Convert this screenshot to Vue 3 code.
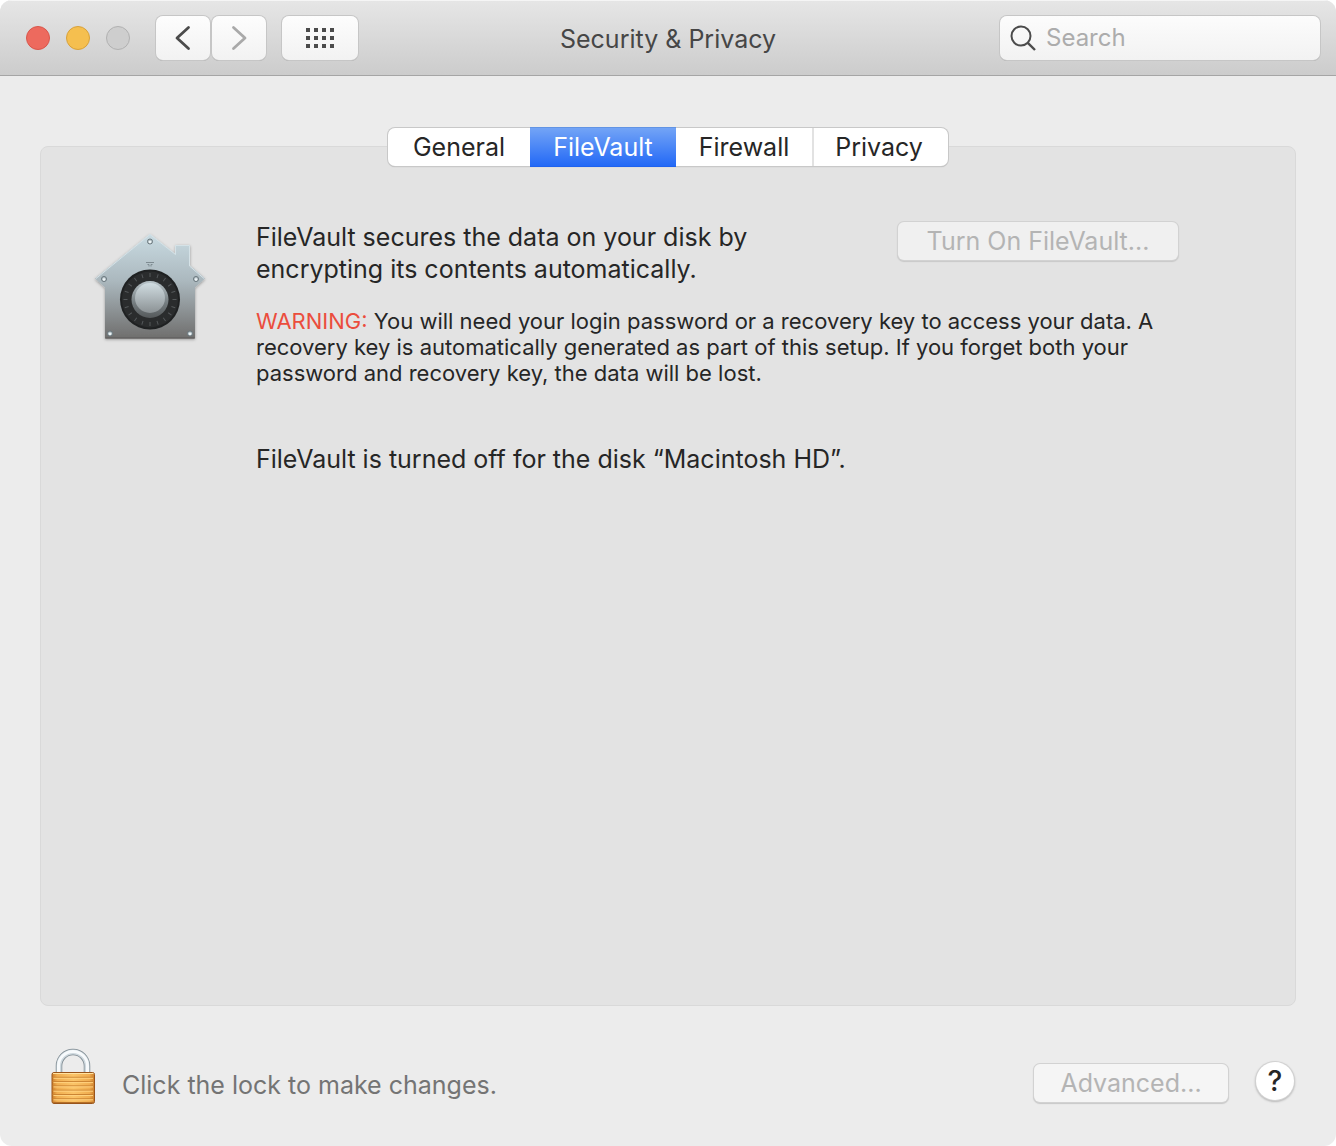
<script setup>
import { ref } from 'vue';

const tabs = ['General', 'FileVault', 'Firewall', 'Privacy'];
const activeTab = ref('FileVault');
const search = ref('');

// Ticks around the safe dial, one every 18 degrees
const ticks = Array.from({ length: 20 }, (_, i) => i * 18);
const rivets = [
    { x: 70, y: 20.5 },
    { x: 24, y: 58 },
    { x: 116, y: 58 },
    { x: 30, y: 112.5 },
    { x: 110, y: 112.5 }
];
</script>

<template>
    <div class="window">
        <header class="toolbar">
            <div class="toolbar-left">
                <div class="lights">
                    <button class="light red" aria-label="Close"></button>
                    <button class="light yellow" aria-label="Minimize"></button>
                    <button class="light gray" aria-label="Zoom" disabled></button>
                </div>
                <div class="nav">
                    <button class="tool-btn" aria-label="Back">
                        <svg width="54" height="44" viewBox="0 0 54 44">
                            <path d="M32.5 11.500L21 22L32.5 32.500" fill="none" stroke="#4b4b4b" stroke-width="2.8" stroke-linecap="round" stroke-linejoin="round" />
                        </svg>
                    </button>
                    <button class="tool-btn" aria-label="Forward" disabled>
                        <svg width="54" height="44" viewBox="0 0 54 44">
                            <path d="M21.5 11.500L33 22L21.5 32.500" fill="none" stroke="#a9a9a9" stroke-width="2.8" stroke-linecap="round" stroke-linejoin="round" />
                        </svg>
                    </button>
                </div>
                <button class="tool-btn grid-btn" aria-label="Show All">
                    <svg width="28" height="20" viewBox="0 0 28 20" fill="#4b4b4b">
                        <template v-for="row in 3" :key="row">
                            <rect v-for="col in 4" :key="col" :x="(col - 1) * 8" :y="(row - 1) * 8" width="4" height="4" />
                        </template>
                    </svg>
                </button>
            </div>

            <h1 class="title">Security &amp; Privacy</h1>

            <label class="search">
                <svg width="26" height="26" viewBox="0 0 26 26" fill="none" stroke="#4b4b4b" stroke-width="2">
                    <circle cx="11" cy="11" r="9.5" />
                    <path d="M17.8 17.8L25 25" stroke-width="2.4" />
                </svg>
                <input v-model="search" type="text" placeholder="Search" aria-label="Search">
            </label>
        </header>

        <main class="content">
            <div class="tabs" role="tablist">
                <button
                    v-for="tab in tabs"
                    :key="tab"
                    class="tab"
                    :class="{ active: tab === activeTab }"
                    role="tab"
                    :aria-selected="tab === activeTab"
                    @click="activeTab = tab"
                >{{ tab }}</button>
            </div>

            <section class="panel">
                <svg class="vault" width="140" height="130" viewBox="0 1 140 130">
                    <defs>
                        <linearGradient id="steel" x1="0" y1="0" x2="0" y2="1">
                            <stop offset="0" stop-color="#c9dbe2" />
                            <stop offset="0.45" stop-color="#abb8be" />
                            <stop offset="1" stop-color="#6f6e6d" />
                        </linearGradient>
                        <linearGradient id="knob" x1="0" y1="0" x2="0" y2="1">
                            <stop offset="0" stop-color="#d0dce1" />
                            <stop offset="1" stop-color="#8b9194" />
                        </linearGradient>
                        <linearGradient id="rim" x1="0" y1="0" x2="0" y2="1">
                            <stop offset="0" stop-color="#b9c5ca" />
                            <stop offset="0.6" stop-color="#747c7f" />
                            <stop offset="1" stop-color="#55595b" />
                        </linearGradient>
                        <filter id="drop" x="-10%" y="-10%" width="120%" height="120%">
                            <feDropShadow dx="0" dy="1" stdDeviation="1.5" flood-color="#000" flood-opacity="0.35" />
                        </filter>
                    </defs>
                    <path d="M70 14L95.500 34V25H110V45.500L125 58.500L115 67.500V118.500H25V67.500L15 58.500Z" fill="url(#steel)" filter="url(#drop)" />
                    <path d="M16 58.500L70 14.500L95.500 34.500V25.500H109.500V46L124 58.500" fill="none" stroke="#d5e2e7" stroke-width="1" />
                    <path d="M25.500 118H114.500" stroke="#5a5959" stroke-width="1" />
                    <path d="M66 42.500H74M67.500 44.500H69V46.500M72.500 44.500H71V46.500" fill="none" stroke="#7e8b91" stroke-width="1" />
                    <g v-for="(r, i) in rivets" :key="i">
                        <circle :cx="r.x" :cy="r.y + 1" r="2.5" fill="#b9c5ca" stroke="#68757b" stroke-width="1" />
                        <circle :cx="r.x" :cy="r.y + 1.5" r="1.3" fill="#edf4f6" />
                    </g>
                    <circle cx="70" cy="79.5" r="30" fill="#1f2122" />
                    <circle cx="70" cy="79.5" r="28" fill="#2a2c2d" />
                    <path
                        v-for="angle in ticks"
                        :key="angle"
                        d="M70 53V57"
                        stroke="#54585a"
                        stroke-width="1"
                        :transform="`rotate(${angle} 70 79.5)`"
                    />
                    <circle cx="70" cy="79.5" r="18.5" fill="url(#rim)" />
                    <circle cx="70" cy="78" r="15" fill="url(#knob)" />
                </svg>

                <div class="info">
                    <div class="intro">
                        <p class="lead">FileVault secures the data on your disk by<br>encrypting its contents automatically.</p>
                        <button class="push-btn turn-on" disabled>Turn On FileVault...</button>
                    </div>
                    <p class="warning">
                        <span class="warning-label">WARNING:</span> You will need your login password or a recovery key to access your data. A<br>
                        recovery key is automatically generated as part of this setup. If you forget both your<br>
                        password and recovery key, the data will be lost.
                    </p>
                    <p class="lead">FileVault is turned off for the disk “Macintosh HD”.</p>
                </div>
            </section>
        </main>

        <footer class="footer">
            <button class="lock" aria-label="Unlock">
                <svg width="46" height="58" viewBox="0 0 46 58">
                    <defs>
                        <linearGradient id="brass" x1="0" y1="0" x2="1" y2="0">
                            <stop offset="0" stop-color="#cd7f2c" />
                            <stop offset="0.12" stop-color="#f0ad50" />
                            <stop offset="0.5" stop-color="#fbc468" />
                            <stop offset="0.88" stop-color="#f0ad50" />
                            <stop offset="1" stop-color="#cd7f2c" />
                        </linearGradient>
                    </defs>
                    <path d="M9 26V18a14 14 0 0 1 28 0V26" fill="none" stroke="#7f8b92" stroke-width="6.5" />
                    <path d="M9 26V18a14 14 0 0 1 28 0V26" fill="none" stroke="#cdd7dd" stroke-width="5" />
                    <path d="M8.500 26V18a14.500 14.500 0 0 1 29 0V26" fill="none" stroke="#f7fafc" stroke-width="3" />
                    <rect x="2" y="24.5" width="42.5" height="31" rx="2" fill="url(#brass)" stroke="#98541b" />
                    <path d="M3 25.500H43.500" stroke="#ffe2a0" />
                    <path v-for="n in 6" :key="n" :d="`M2.5 ${25 + n * 4.3}H44`" stroke="#cb8433" />
                    <path v-for="n in 6" :key="'hi' + n" :d="`M3.5 ${26 + n * 4.3}H43`" stroke="#ffd27f" />
                    <path d="M2.500 54.500H44" stroke="#b56f28" />
                </svg>
            </button>
            <span class="lock-text">Click the lock to make changes.</span>
            <button class="push-btn advanced" disabled>Advanced...</button>
            <button class="help" aria-label="Help">?</button>
        </footer>
    </div>
</template>

<style>
body {
    background-color: #ffffff;
}
</style>

<style scoped>
.window {
    box-sizing: border-box;
    min-height: 100vh;
    display: flex;
    flex-direction: column;
    background-color: #ececec;
    border-radius: 12px;
    overflow: hidden;
    font-family: Inter, 'Liberation Sans', sans-serif;
    font-size: 25px;
    color: #262626;
}

button,
input {
    font: inherit;
    padding: 0;
    margin: 0;
    border: none;
    background: none;
}

.toolbar {
    display: grid;
    grid-template-columns: 1fr auto 1fr;
    align-items: center;
    box-sizing: border-box;
    height: 76px;
    padding: 0 16px;
    background: linear-gradient(#e6e6e6, #cccccc);
    border-bottom: 1px solid #a5a5a5;
    box-shadow: inset 0 1px 0 #f5f5f5;
}

.toolbar-left {
    display: flex;
    align-items: center;
}

.lights {
    display: flex;
    gap: 16px;
    margin: 0 26px 0 10px;
}

.light {
    width: 24px;
    height: 24px;
    border-radius: 50%;
}

.red {
    background-color: #ed6a5e;
    border: 1px solid #d9564b;
}

.yellow {
    background-color: #f5bf4f;
    border: 1px solid #d8a13a;
}

.gray {
    background-color: #cecece;
    border: 1px solid #b1b1b1;
}

.nav {
    display: flex;
    gap: 2px;
    margin-right: 16px;
}

.tool-btn {
    display: flex;
    align-items: center;
    justify-content: center;
    width: 54px;
    height: 44px;
    border-radius: 7px;
    background: linear-gradient(#fdfdfd, #f2f2f2);
    box-shadow: 0 0 0 1px #c6c6c6, 0 1px 0 0 #9c9c9c;
}

.grid-btn {
    width: 76px;
}

.title {
    margin: 0;
    font-size: 25px;
    font-weight: 400;
    line-height: 32px;
    padding-top: 2px;
    color: #464646;
}

.search {
    justify-self: end;
    display: flex;
    align-items: center;
    gap: 10px;
    box-sizing: border-box;
    width: 320px;
    height: 44px;
    padding: 0 10px;
    border-radius: 7px;
    background: linear-gradient(#fcfcfc, #f2f2f2);
    box-shadow: 0 0 0 1px #c6c6c6, 0 1px 0 0 #9c9c9c;
}

.search svg {
    flex: none;
}

.search input {
    flex: 1;
    min-width: 0;
    font-size: 24px;
    color: #262626;
    outline: none;
}

.search input::placeholder {
    color: #acacac;
    opacity: 1;
}

.content {
    flex: 1;
    display: flex;
    flex-direction: column;
    padding: 52px 40px 0;
}

.tabs {
    position: relative;
    z-index: 1;
    align-self: center;
    display: grid;
    grid-template-columns: 142px 146px 138px 134px;
    height: 38px;
    margin-bottom: -20px;
    border-radius: 7px;
    background-color: #ffffff;
    box-shadow: 0 0 0 1px #c8c8c8, 0 1px 1px 0 #a8a8a8;
}

.tab {
    line-height: 38px;
    color: #262626;
}

.tab:nth-child(3) {
    border-right: 2px solid #e2e2e2;
}

.tab:last-child {
    padding-right: 4px;
}

.tab.active {
    color: #ffffff;
    background: linear-gradient(#73a4f6, #2369f6);
    box-shadow: 0 -1px 0 #6294e4, 0 1px 0 #1f62ee;
}

.panel {
    flex: 1;
    display: flex;
    align-items: flex-start;
    gap: 36px;
    padding: 74px 117px 0 39px;
    border: 1px solid #d9d9d9;
    border-radius: 8px;
    background-color: #e3e3e3;
}

.vault {
    flex: none;
}

.info {
    flex: 1;
}

.intro {
    display: flex;
    justify-content: space-between;
    align-items: flex-start;
}

.lead {
    margin: 0;
    line-height: 32px;
}

.push-btn {
    height: 38px;
    border-radius: 6px;
    background-color: #f0f0f0;
    color: #b4b4b4;
    line-height: 38px;
    box-shadow: 0 0 0 1px #d2d2d2, 0 1px 1px 1px #c8c8c8;
}

.turn-on {
    width: 280px;
    margin-top: 1px;
}

.warning {
    margin: 23px 0 57px;
    font-size: 22px;
    line-height: 26px;
    white-space: nowrap;
}

.warning-label {
    color: #eb4d3d;
}

.footer {
    display: flex;
    align-items: flex-start;
    height: 140px;
    box-sizing: border-box;
    padding: 42px 42px 0 50px;
}

.lock {
    display: flex;
    margin-right: 26px;
}

.lock-text {
    flex: 1;
    margin-top: 21px;
    line-height: 32px;
    color: #747474;
}

.advanced {
    width: 194px;
    margin: 16px 28px 0 0;
    background-color: #f5f5f5;
}

.help {
    width: 38px;
    height: 38px;
    margin-top: 14px;
    border-radius: 50%;
    background-color: #ffffff;
    color: #262626;
    font-size: 28px;
    font-weight: 500;
    line-height: 38px;
    box-shadow: 0 0 0 1px #d2d2d2, 0 1px 2px 1px #b8b8b8;
}
</style>
